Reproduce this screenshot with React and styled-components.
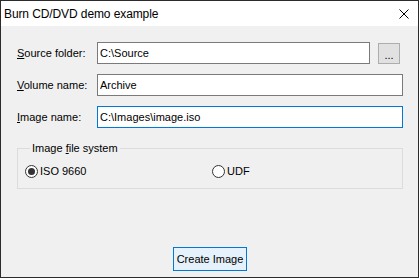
import React from 'react';
import styled, { createGlobalStyle } from 'styled-components';

const GlobalStyle = createGlobalStyle`
  html, body {
    margin: 0;
    padding: 0;
    background: #fff;
  }
  body {
    font-family: 'Liberation Sans', Arial, sans-serif;
    font-size: 11px;
    color: #000;
  }
`;

export default function App() {
  return (
    <>
      <GlobalStyle />
      <Window>
        <TitleBar>
          <Title>Burn CD/DVD demo example</Title>
          <CloseIcon viewBox="0 0 10 10">
            <path d="M0.5 0.5 L9.5 9.5 M9.5 0.5 L0.5 9.5" stroke="#000" strokeWidth="1" />
          </CloseIcon>
        </TitleBar>
        <Body>
          <Form>
            <Label>
              <u>S</u>ource folder:
            </Label>
            <FieldWithButton>
              <TextInput defaultValue="C:\Source" />
              <BrowseButton>...</BrowseButton>
            </FieldWithButton>
            <Label>
              <u>V</u>olume name:
            </Label>
            <TextInput defaultValue="Archive" />
            <Label>
              <u>I</u>mage name:
            </Label>
            <TextInput defaultValue="C:\Images\image.iso" $focused />
          </Form>
          <GroupBox>
            <Legend>
              Image <u>f</u>ile system
            </Legend>
            <RadioRow>
              <RadioOption>
                <RadioCircle $checked />
                ISO 9660
              </RadioOption>
              <RadioOption>
                <RadioCircle />
                UDF
              </RadioOption>
            </RadioRow>
          </GroupBox>
          <Footer>
            <PushButton>Create Image</PushButton>
          </Footer>
        </Body>
      </Window>
    </>
  );
}

const Window = styled.div`
  display: flex;
  flex-direction: column;
  width: 419px;
  height: 278px;
  box-sizing: border-box;
  border: 1px solid #2b2b2b;
  background: #f0f0f0;
`;

const TitleBar = styled.div`
  display: flex;
  align-items: center;
  justify-content: space-between;
  height: 25px;
  padding: 0 9px 0 3px;
  background: #fff;
`;

const Title = styled.span`
  font-size: 12px;
  line-height: 14px;
  letter-spacing: -0.1px;
`;

const CloseIcon = styled.svg`
  width: 10px;
  height: 10px;
`;

const Body = styled.div`
  flex: 1;
  display: flex;
  flex-direction: column;
  padding: 16px 15px 6px 16px;
`;

const Form = styled.div`
  display: grid;
  grid-template-columns: 80px 1fr;
  row-gap: 10px;
  align-items: center;
`;

const Label = styled.label`
  line-height: 14px;
  white-space: nowrap;
`;

const FieldWithButton = styled.div`
  display: flex;
  align-items: center;
  gap: 8px;
  padding-right: 3px;
`;

const TextInput = styled.input`
  flex: 1;
  min-width: 0;
  height: 22px;
  box-sizing: border-box;
  margin: 0;
  padding: 0 2px;
  border: 1px solid ${(p) => (p.$focused ? '#0078d7' : '#7a7a7a')};
  background: #fff;
  font-family: inherit;
  font-size: 11px;
  color: #000;
  outline: none;
`;

const BrowseButton = styled.button`
  width: 22px;
  height: 21px;
  box-sizing: border-box;
  margin: 0;
  padding: 4px 0 0;
  border: 1px solid #adadad;
  background: #e1e1e1;
  font-family: inherit;
  font-size: 11px;
  line-height: 12px;
  color: #000;
`;

const GroupBox = styled.fieldset`
  margin: 13px 0 0;
  padding: 9px 7px 10px;
  border: 1px solid #dcdcdc;
  min-width: 0;
`;

const Legend = styled.legend`
  margin-left: 5px;
  padding: 0 2px;
  line-height: 14px;
`;

const RadioRow = styled.div`
  display: grid;
  grid-template-columns: 187px 1fr;
  align-items: center;
`;

const RadioOption = styled.label`
  display: flex;
  align-items: center;
  gap: 2px;
  line-height: 14px;
`;

const RadioCircle = styled.span`
  position: relative;
  width: 13px;
  height: 13px;
  box-sizing: border-box;
  border: 1px solid #333;
  border-radius: 50%;
  background: #fff;

  &::after {
    content: '';
    display: ${(p) => (p.$checked ? 'block' : 'none')};
    position: absolute;
    left: 2px;
    top: 2px;
    width: 7px;
    height: 7px;
    border-radius: 50%;
    background: #333;
  }
`;

const Footer = styled.div`
  flex: 1;
  display: flex;
  align-items: flex-end;
  justify-content: center;
`;

const PushButton = styled.button`
  width: 74px;
  height: 24px;
  box-sizing: border-box;
  margin: 0;
  padding: 0;
  border: 1px solid #0078d7;
  background: #e5f1fb;
  font-family: inherit;
  font-size: 11px;
  white-space: nowrap;
  color: #000;
`;
